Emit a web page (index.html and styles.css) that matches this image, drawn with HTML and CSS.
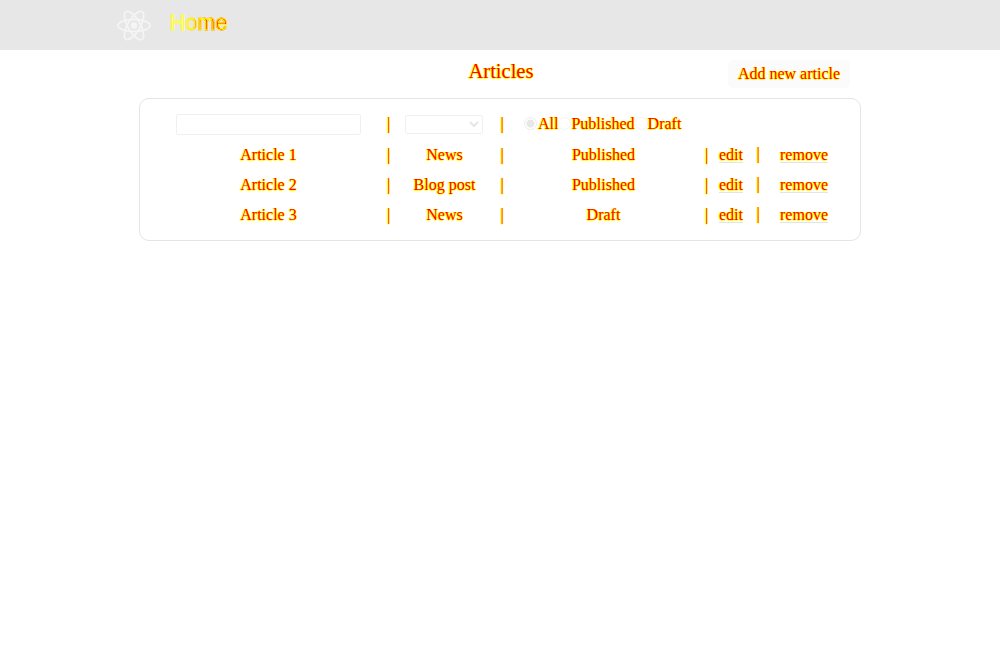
FILE: index.html
```
<!DOCTYPE html>
<html lang="en">
<head>
<meta charset="utf-8">
<title>Articles</title>
<link rel="stylesheet" href="styles.css">
</head>
<body>
<header class="topbar">
  <svg class="logo" viewBox="-12 -11 24 22" width="36" height="33"><circle r="2.1" fill="#f5f5f5"/><g fill="none" stroke="#f5f5f5" stroke-width="1.1"><ellipse rx="10.7" ry="4.1"/><ellipse rx="10.7" ry="4.1" transform="rotate(60)"/><ellipse rx="10.7" ry="4.1" transform="rotate(120)"/></g></svg>
  <a class="home">Home</a>
</header>
<main class="page">
  <div class="heading"><h1 class="title">Articles</h1><button class="add">Add new article</button></div>
  <section class="panel">
    <div class="row filters">
      <div class="cell"><input class="search" type="text"></div><span class="bar">|</span>
      <div class="cell"><div class="select"><svg width="10" height="6" viewBox="0 0 10 6"><path d="M1 1l4 4 4-4" fill="none" stroke="#e6e6e6" stroke-width="2"/></svg></div></div><span class="bar">|</span>
      <div class="radios"><i class="radio on"></i><span>All</span><i class="radio"></i><span>Published</span><i class="radio"></i><span>Draft</span></div>
    </div>
    <div class="row"><div class="cell">Article 1</div><span class="bar">|</span><div class="cell">News</div><span class="bar">|</span><div class="cell">Published</div><span class="bar">|</span><div class="cell"><a class="link">edit</a></div><span class="bar up">|</span><div class="cell"><a class="link">remove</a></div></div>
    <div class="row"><div class="cell">Article 2</div><span class="bar">|</span><div class="cell">Blog post</div><span class="bar">|</span><div class="cell">Published</div><span class="bar">|</span><div class="cell"><a class="link">edit</a></div><span class="bar up">|</span><div class="cell"><a class="link">remove</a></div></div>
    <div class="row"><div class="cell">Article 3</div><span class="bar">|</span><div class="cell">News</div><span class="bar">|</span><div class="cell">Draft</div><span class="bar">|</span><div class="cell"><a class="link">edit</a></div><span class="bar up">|</span><div class="cell"><a class="link">remove</a></div></div>
  </section>
</main>
</body>
</html>
```
FILE: styles.css
```
* { box-sizing: border-box; }
body { margin: 0; background: #fff; color: #f00; font: 16px/18px "Liberation Serif", serif; text-shadow: 1px 0 #ff0, -1px 0 #ff0, 0 .5px #ff0; }
.topbar { height: 50px; background: #e7e7e7; padding-left: 116px; display: flex; align-items: center; }
.home { margin: -5px 0 0 18px; font: 21.6px/24px "Liberation Sans", sans-serif; color: transparent; text-shadow: none; background: linear-gradient(90deg, #f4f4f4 25%, #f00 65%); -webkit-background-clip: text; background-clip: text; -webkit-text-stroke: 1px #ff0; }
.page { width: 722px; margin: 0 auto; }
.heading { height: 48px; display: grid; grid-template-columns: 1fr 122px 11px; }
.title { grid-column: 1 / -1; grid-row: 1; margin: 10px 0 0; padding-left: 2px; font-size: 20.5px; line-height: 23px; font-weight: 400; text-align: center; }
.add { grid-column: 2; grid-row: 1; height: 28px; margin-top: 10px; padding: 0; border: 0; border-radius: 5px; background: #fbfbfb; color: inherit; font: inherit; text-shadow: inherit; }
.panel { height: 143px; border: 1px solid #e4e4e4; border-radius: 10px; padding-top: 10px; }
.row { display: grid; grid-template-columns: 229px 11px 101px 14px 189px 17px 32px 22px 70px; padding-left: 14px; height: 30px; align-items: center; text-align: center; }
.filters { height: 31px; }
.filters .bar, .radios span { margin-top: -1px; }
.cell { white-space: nowrap; display: flex; justify-content: center; }
.search { width: 185px; height: 21px; border: 1px solid #f0f0f0; border-radius: 2px; background: #fff; }
.select { width: 78px; height: 19px; margin-right: 2px; border: 1px solid #f0f0f0; border-radius: 2px; display: flex; justify-content: flex-end; align-items: center; padding: 0 3px 1px 0; }
.radios { display: flex; align-items: center; white-space: nowrap; padding-left: 15px; }
.radio { width: 13px; height: 13px; flex: none; border: 1px solid #f3f3f3; border-radius: 50%; margin-top: -3px; }
.on { background: radial-gradient(circle, #e7e7e7 0 3.8px, transparent 4.3px); border-color: #ececec; margin-right: 1px; }
.link { border-bottom: 1px solid #e4e4e4; line-height: 15px; }
.up { margin-top: -2px; }
```
